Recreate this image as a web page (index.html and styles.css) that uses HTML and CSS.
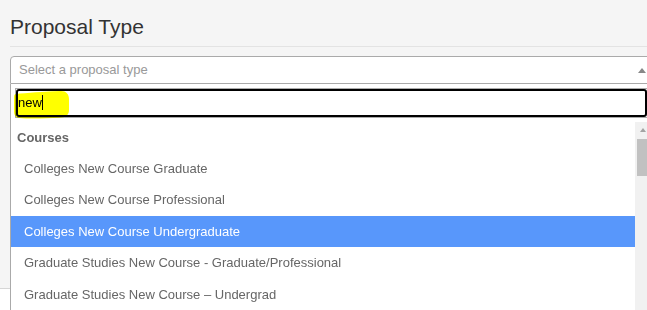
FILE: index.html
```html
<!DOCTYPE html>
<html lang="en">
<head>
<meta charset="utf-8">
<title>Proposal Type</title>
<link rel="stylesheet" href="styles.css">
</head>
<body>
<div class="page">
  <div class="header">
    <h1 class="title">Proposal Type</h1>
  </div>
  <div class="field">
    <div class="select">
      <span class="placeholder">Select a proposal type</span>
      <span class="arrow"></span>
    </div>
    <div class="dropdown">
      <div class="search">
        <div class="search-field">
          <div class="search-ring">new<span class="caret"></span></div>
        </div>
      </div>
      <svg class="marker" viewBox="0 0 55 29" width="55" height="29" aria-hidden="true">
        <path d="M2 4 C12 3 30 1.5 47 1 C52 1 55 4 55 9 L55 20 C55 25 52 27.5 45 27.8 C31 28.6 14 28.8 5 28 C1.5 27.6 0 25 0 21 L0 7 C0 5 0.8 4.1 2 4 Z" fill="#ffff00"/>
      </svg>
      <div class="results">
        <ul class="results-list">
          <li class="group">Courses</li>
          <li class="option">Colleges New Course Graduate</li>
          <li class="option">Colleges New Course Professional</li>
          <li class="option highlighted">Colleges New Course Undergraduate</li>
          <li class="option">Graduate Studies New Course - Graduate/Professional</li>
          <li class="option">Graduate Studies New Course – Undergrad</li>
        </ul>
        <div class="scrollbar">
          <div class="sb-up"></div>
          <div class="sb-thumb"></div>
        </div>
      </div>
    </div>
  </div>
  <div class="panel"></div>
</div>
</body>
</html>
```
FILE: styles.css
```css
html, body {
  margin: 0;
  padding: 0;
}
body {
  background: #f5f5f5;
  font-family: "Liberation Sans", Arial, sans-serif;
  width: 647px;
  height: 310px;
  overflow: hidden;
}
.page {
  padding: 15px 0 0 10px;
}
.header {
  padding-bottom: 7px;
  border-bottom: 1px solid #e3e3e3;
}
.title {
  margin: 0;
  font-size: 21px;
  line-height: 24px;
  font-weight: 400;
  color: #333;
}
.field {
  margin-top: 9px;
  width: 643px;
  position: relative;
  z-index: 2;
}
.select {
  position: relative;
  height: 28px;
  box-sizing: border-box;
  border: 1px solid #aaa;
  border-radius: 4px 4px 0 0;
  background: #fff;
  padding-left: 8px;
  font-size: 13px;
  line-height: 26px;
  color: #999;
}
.arrow {
  position: absolute;
  right: 0;
  top: 0;
  width: 20px;
  height: 26px;
}
.arrow::after {
  content: "";
  position: absolute;
  left: 50%;
  top: 50%;
  margin-left: -4px;
  margin-top: -2px;
  border-style: solid;
  border-width: 0 4px 5px 4px;
  border-color: transparent transparent #888 transparent;
}
.dropdown {
  position: absolute;
  top: 28px;
  left: 0;
  width: 643px;
  box-sizing: border-box;
  border: 1px solid #aaa;
  border-top: none;
  background: #fff;
  isolation: isolate;
}
.search {
  padding: 4px;
}
.search-field {
  height: 30px;
  box-sizing: border-box;
  border: 1px solid #aaa;
  background: #fff;
}
.search-ring {
  height: 100%;
  box-sizing: border-box;
  border: 2px solid #000;
  border-radius: 3px;
  font-size: 13px;
  line-height: 24px;
  color: #000;
}
.caret {
  display: inline-block;
  width: 1px;
  height: 15px;
  background: #000;
  vertical-align: -3px;
}
.marker {
  position: absolute;
  left: 3px;
  top: 6px;
  mix-blend-mode: multiply;
  filter: blur(0.4px);
}
.results {
  display: flex;
  height: 188px;
  overflow: hidden;
}
.results-list {
  flex: 1;
  list-style: none;
  margin: 0;
  padding: 0;
  font-size: 13px;
  line-height: 15.5px;
}
.group {
  padding: 7.5px 6px;
  font-weight: 700;
  color: #666;
}
.option {
  padding: 8px 6px 8px 13px;
  color: #666;
}
.option.highlighted {
  background: #5897fb;
  color: #fff;
}
.scrollbar {
  width: 17px;
  background: #f1f1f1;
  display: flex;
  flex-direction: column;
}
.sb-up {
  height: 17px;
  position: relative;
}
.sb-up::after {
  content: "";
  position: absolute;
  left: 5px;
  top: 6px;
  border-style: solid;
  border-width: 0 3.5px 4px 3.5px;
  border-color: transparent transparent #a3a3a3 transparent;
}
.sb-thumb {
  height: 37px;
  margin: 0 2px;
  background: #c1c1c1;
}
.panel {
  margin-top: 204px;
  margin-left: -10px;
  border-top: 1px solid #d6d6d6;
  background: #fff;
  height: 21px;
}
```
